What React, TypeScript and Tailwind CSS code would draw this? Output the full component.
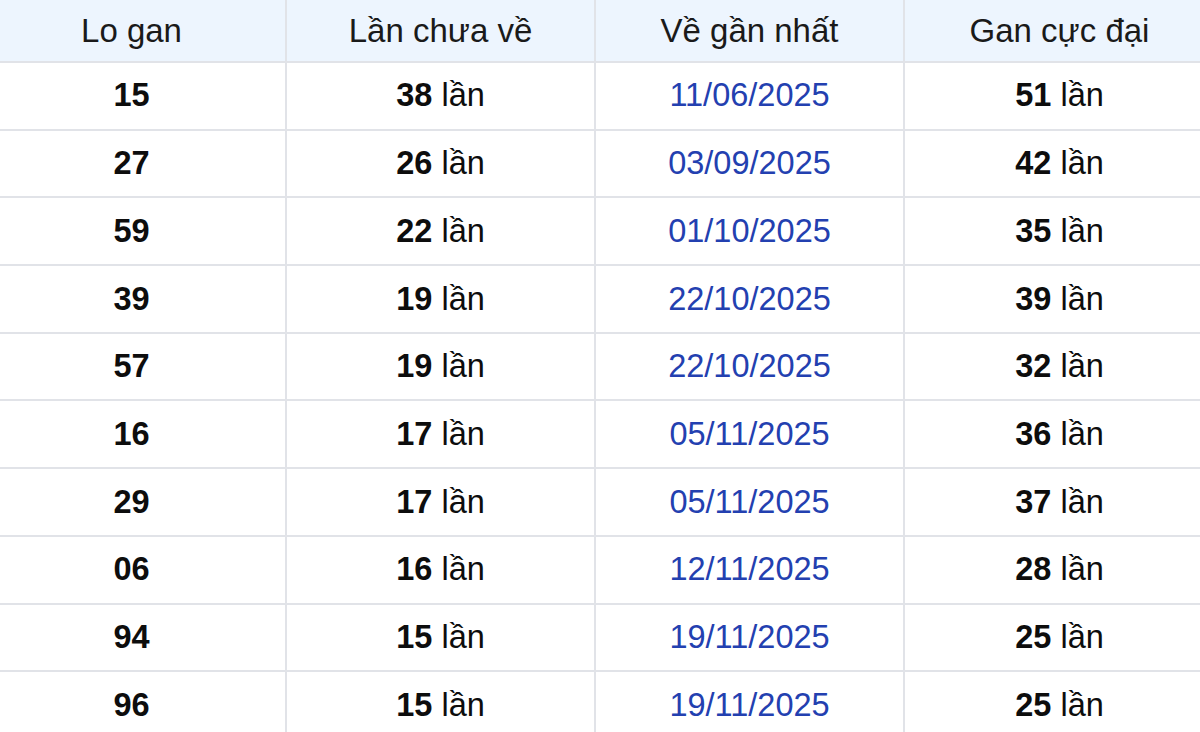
import React from "react";

const rows = [
  { num: "15", count: 38, last: "11/06/2025", max: 51 },
  { num: "27", count: 26, last: "03/09/2025", max: 42 },
  { num: "59", count: 22, last: "01/10/2025", max: 35 },
  { num: "39", count: 19, last: "22/10/2025", max: 39 },
  { num: "57", count: 19, last: "22/10/2025", max: 32 },
  { num: "16", count: 17, last: "05/11/2025", max: 36 },
  { num: "29", count: 17, last: "05/11/2025", max: 37 },
  { num: "06", count: 16, last: "12/11/2025", max: 28 },
  { num: "94", count: 15, last: "19/11/2025", max: 25 },
  { num: "96", count: 15, last: "19/11/2025", max: 25 },
];

const headers = ["Lo gan", "Lần chưa về", "Về gần nhất", "Gan cực đại"];

export default function App() {
  return (
    <div
      className="w-[1200px] h-[732px] overflow-hidden bg-white"
      style={{ fontFamily: '"Liberation Sans", Arial, sans-serif' }}
    >
      <div className="-ml-[22px] w-[1236px]">
        {/* Header */}
        <div className="grid grid-cols-4 h-[63px] bg-[#edf5fe] border-b-2 border-[#e1e3e8]">
          {headers.map((h, i) => (
            <div
              key={h}
              className={`flex items-center justify-center text-[33px] text-[#1a1a1a] ${
                i < 3 ? "border-r-2 border-[#e1e3e8]" : ""
              }`}
            >
              {h}
            </div>
          ))}
        </div>

        {/* Rows */}
        {rows.map((r, idx) => (
          <div
            key={idx}
            className="grid grid-cols-4 h-[67.7px] border-b-2 border-[#e1e3e8] text-[32.5px] text-[#0d0d0d]"
          >
            <div className="flex items-center justify-center border-r-2 border-[#e1e3e8] font-bold">
              {r.num}
            </div>
            <div className="flex items-center justify-center border-r-2 border-[#e1e3e8]">
              <span className="font-bold">{r.count}</span>&nbsp;lần
            </div>
            <div className="flex items-center justify-center border-r-2 border-[#e1e3e8] text-[#2340b0]">
              {r.last}
            </div>
            <div className="flex items-center justify-center">
              <span className="font-bold">{r.max}</span>&nbsp;lần
            </div>
          </div>
        ))}
      </div>
    </div>
  );
}
